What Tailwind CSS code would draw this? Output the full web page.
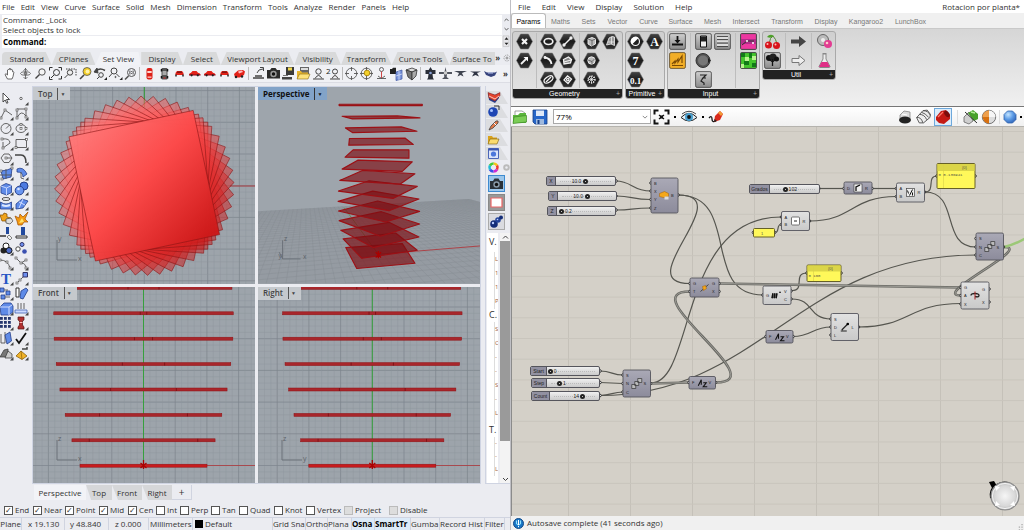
<!DOCTYPE html>
<html lang="en">
<head>
    <meta charset="UTF-8">
    <meta name="viewport" content="width=device-width, initial-scale=1.0">
    <title>Rotacion por planta</title>
    <script src="https://cdn.jsdelivr.net/npm/@tailwindcss/browser@4"></script>
</head>
<body class="flex h-screen overflow-hidden bg-[#ebecf1] font-['Open_Sans','Noto_Sans',sans-serif] text-[8px] leading-[12px] text-[#333]">

    <!-- Shared symbols -->
    <svg class="absolute size-0" aria-hidden="true">
        <defs>
            <linearGradient id="redShade" gradientUnits="userSpaceOnUse" x1="80" y1="120" x2="220" y2="250">
                <stop offset="0" stop-color="#ff7c7c"/><stop offset=".45" stop-color="#fc4a4a"/><stop offset="1" stop-color="#c40f0f"/>
            </linearGradient>
            <linearGradient id="nodeGrey" x1="0" y1="0" x2="0" y2="1"><stop offset="0" stop-color="#e2e2e2"/><stop offset="1" stop-color="#c9c9c9"/></linearGradient>
            <linearGradient id="nodeDark" x1="0" y1="0" x2="0" y2="1"><stop offset="0" stop-color="#aaa9b6"/><stop offset="1" stop-color="#8c8b9b"/></linearGradient>
            <linearGradient id="btn" x1="0" y1="0" x2="0" y2="1"><stop offset="0" stop-color="#cfcfcf"/><stop offset="1" stop-color="#8b8b8b"/></linearGradient>
            <linearGradient id="hexFill" x1="0" y1="0" x2="0" y2="1"><stop offset="0" stop-color="#444"/><stop offset=".5" stop-color="#1c1c1c"/><stop offset="1" stop-color="#333"/></linearGradient>
            <radialGradient id="blueBall" cx=".35" cy=".3" r=".8"><stop offset="0" stop-color="#c3e4ff"/><stop offset=".5" stop-color="#5c9be6"/><stop offset="1" stop-color="#2c5fb4"/></radialGradient>
            <radialGradient id="greyBall" cx=".5" cy=".5" r=".6"><stop offset="0" stop-color="#f6f6f6"/><stop offset=".6" stop-color="#d8d8d8"/><stop offset="1" stop-color="#a5a5a5"/></radialGradient>
        </defs>
        <symbol id="hex" viewBox="0 0 17 17"><path d="M4.6 1h7.8l4.1 7.5-4.1 7.5H4.6L.5 8.500z" fill="url(#hexFill)" stroke="#777" stroke-width=".5"/></symbol>
        <symbol id="plate" viewBox="0 0 17 17"><rect x=".6" y=".6" width="15.800" height="15.800" rx="1.500" fill="url(#btn)" stroke="#444" stroke-width=".8"/></symbol>
        <symbol id="carSide" viewBox="0 0 15 15"><path d="M2 9q0-2 2-2.300L5.500 5h4L11 6.700q2.500.3 2.500 2.300z" fill="#e32118"/><path d="M2 9h11.500" stroke="#801"/><circle cx="4.600" cy="9.300" r="1.100" fill="#222"/><circle cx="10.800" cy="9.300" r="1.100" fill="#222"/></symbol>
        <symbol id="carFront" viewBox="0 0 15 15"><path d="M3.500 9V7L5 5h5l1.500 2v2z" fill="#e32118"/><path d="M5.400 5.500h4.200l.6 1.300H4.800z" fill="#611"/><path d="M4 8.500v2M11 8.500v2" stroke="#222" stroke-width="1.500"/></symbol>
        <symbol id="lens" viewBox="0 0 15 15"><circle cx="9" cy="6" r="3.200" fill="#f4f4f4" stroke="#555"/><path d="M6.500 8.500L2.500 12.500" stroke="#444" stroke-width="1.500"/></symbol>
    </svg>

    <!-- Rhino -->
    <section class="flex min-w-0 basis-[510px] flex-col overflow-hidden">
        <nav class="flex h-[14px] shrink-0 items-center gap-[6px] bg-white pl-[2px]">
            <a href="#">File</a><a href="#">Edit</a><a href="#">View</a><a href="#">Curve</a><a href="#">Surface</a><a href="#">Solid</a><a href="#">Mesh</a><a href="#">Dimension</a><a href="#">Transform</a><a href="#">Tools</a><a href="#">Analyze</a><a href="#">Render</a><a href="#">Panels</a><a href="#">Help</a>
        </nav>
        <div class="flex shrink-0 pl-[2px] pt-[1px]">
            <div class="min-w-0 flex-1">
                <div class="h-[20px] bg-white pl-[1px] leading-[10px]"><p>Command: _Lock</p><p>Select objects to lock</p></div>
                <div class="mt-[1px] flex h-[12px] items-center bg-white pl-[1px]">
                    <label for="cmd" class="font-bold text-black">Command:</label>
                    <input id="cmd" class="min-w-0 flex-1 outline-none">
                </div>
            </div>
            <svg viewBox="0 0 8 34" class="h-[33px] w-[8px]" fill="none" stroke="#555"><path d="M2.500 6l2-2 2 2M2.500 13.500l2 2 2-2"/><path d="M1 21.500h6v11H1z" fill="#e6e6ea" stroke="#bbb" stroke-width=".6"/><path d="M2.500 25.500l2-2.500 2 2.500zM2.500 28.500l2 2.500 2-2.500z" fill="#222" stroke="none"/></svg>
        </div>

        <!-- Toolbar tabs -->
        <div class="mt-[4px] flex h-[13px] shrink-0 items-stretch pl-[2px]" id="tabs">
            <button class="w-[50px] whitespace-nowrap rounded-t bg-[#d8d9da] [clip-path:polygon(0_0,88%_0,100%_100%,0_100%)]">Standard</button>
            <button class="w-[44px] whitespace-nowrap bg-[#d8d9da] [clip-path:polygon(12%_0,88%_0,100%_100%,0_100%)]">CPlanes</button>
            <button class="w-[46px] whitespace-nowrap bg-[#f1f2f6] [clip-path:polygon(12%_0,94%_0,100%_100%,0_100%)]">Set View</button>
            <button class="w-[42px] whitespace-nowrap bg-[#d8d9da] [clip-path:polygon(0_0,88%_0,100%_100%,0_100%)]">Display</button>
            <button class="w-[38px] whitespace-nowrap bg-[#d8d9da] [clip-path:polygon(12%_0,88%_0,100%_100%,0_100%)]">Select</button>
            <button class="w-[74px] whitespace-nowrap bg-[#d8d9da] [clip-path:polygon(8%_0,92%_0,100%_100%,0_100%)]">Viewport Layout</button>
            <button class="w-[47px] whitespace-nowrap bg-[#d8d9da] [clip-path:polygon(10%_0,88%_0,100%_100%,0_100%)]">Visibility</button>
            <button class="w-[51px] whitespace-nowrap bg-[#d8d9da] [clip-path:polygon(10%_0,88%_0,100%_100%,0_100%)]">Transform</button>
            <button class="w-[58px] whitespace-nowrap bg-[#d8d9da] [clip-path:polygon(10%_0,90%_0,100%_100%,0_100%)]">Curve Tools</button>
            <button class="w-[46px] whitespace-nowrap bg-[#d8d9da] [clip-path:polygon(10%_0,100%_0,100%_100%,0_100%)]">Surface To</button>
            <span class="font-bold">»</span>
            <svg viewBox="0 0 8 13" class="ml-[2px] w-[8px]" fill="none" stroke="#777" stroke-width=".8"><circle cx="5" cy="6" r="3" stroke-dasharray="1 1"/><circle cx="5" cy="6" r="1"/></svg>
        </div>

        <!-- View toolbar -->
        <div class="flex h-[18px] shrink-0 items-center border-b border-[#dcdde4] bg-[#f0f1f5] pl-[3px] [&>svg]:size-[15px] [&>svg]:shrink-0" id="viewbar">
            <svg viewBox="0 0 15 15" fill="#fff" stroke="#444" stroke-width=".8"><path d="M4.500 13L2 8.500l1-.8L4.500 9V4l1-.5.6.5.3-1.500h1l.4 1.500.9-.8.6.8.3 1.800.7-.3.600.6-.9 4.500L9 13z"/></svg>
            <svg viewBox="0 0 15 15" fill="none" stroke="#555" stroke-width=".8"><ellipse cx="7.500" cy="7.500" rx="5" ry="1.800"/><path d="M7.500 2v11M5.500 5l2-2.500 2 2.500M5.500 11l2 2 2-2"/><circle cx="7.500" cy="7.500" r="1.300" fill="#888"/></svg>
            <svg><use href="#lens"/></svg>
            <svg viewBox="0 0 15 15" fill="none" stroke="#333"><path d="M1.500 4.500v-3h3M10.500 1.500h3v3M13.500 10v3h-3M4.500 13.500h-3v-3"/><circle cx="8.500" cy="6.500" r="3"/><path d="M6 9l-3 3"/></svg>
            <svg viewBox="0 0 15 15" fill="none" stroke="#444"><path d="M3 3h10v7" stroke-dasharray="1.500 1"/><circle cx="7" cy="6.500" r="2.700" fill="#eee"/><path d="M5 8.500L1.500 12"/></svg>
            <svg viewBox="0 0 15 15"><circle cx="9" cy="5.500" r="4" fill="#f4ce25" stroke="#555" stroke-width=".8"/><circle cx="9.500" cy="5.500" r="2" fill="#fff3a8"/><path d="M6 9L2 13" stroke="#444" stroke-width="1.600"/></svg>
            <svg viewBox="0 0 15 15" fill="none" stroke="#444"><path d="M2 6q4-5 10-1.500" stroke-width="1.500"/><path d="M4 2L1 6l4 1z" fill="#444"/><circle cx="8" cy="9" r="2.300"/><path d="M6.500 10.500l-2.500 2.500"/><path d="M14 11v3h-3z" fill="#222" stroke="none"/></svg>
            <svg viewBox="0 0 15 15" fill="none" stroke="#444"><circle cx="6" cy="5" r="3"/><path d="M4 7.500L1 11M8.500 8l3 3"/><circle cx="7.500" cy="11" r=".6"/><path d="M14.500 11v3h-3z" fill="#222" stroke="none"/></svg>
            <svg viewBox="0 0 15 15" fill="none" stroke="#555"><circle cx="8.500" cy="6.500" r="4"/><path d="M5.500 10L2 13.500" stroke-width="1.600"/><path d="M6.900 4.500v4M10.100 4.500v4M8.500 5.200v.8M8.500 7.200v.8" stroke="#222" stroke-width=".8"/></svg>
            <span class="mx-[1px] h-[13px] w-[2px] border-l border-[#bbb]"></span>
            <svg viewBox="0 0 15 15"><rect x="4.500" y="2" width="6" height="11.500" rx="2" fill="#dd2018"/><path d="M5.300 5h4.400v2H5.300zM5.500 10.500h4v1.200h-4z" fill="#ffd5d0"/></svg>
            <svg viewBox="0 0 15 15"><rect x="4.500" y="2" width="6" height="11.500" rx="1" fill="#555"/><path d="M5.500 5h4v4h-4z" fill="#aaa"/><path d="M4.500 3v2.500M10.500 3v2.500M4.500 10v2.500M10.500 10v2.500" stroke="#111" stroke-width="1.500"/><path d="M6.500 12h2" stroke="#d22"/></svg>
            <svg><use href="#carFront"/></svg>
            <svg><use href="#carSide"/></svg>
            <svg><use href="#carSide"/></svg>
            <svg><use href="#carFront"/></svg>
            <svg viewBox="0 0 15 15"><path d="M2 8l4-3.500 5-.5 2 1.500-1 3.500-4 2.500-5 0z" fill="#e32118"/><path d="M6 5.500l4-1 1 1.500-4 1.500z" fill="#fbb"/><circle cx="4" cy="11" r="1.200" fill="#222"/><circle cx="10" cy="10.500" r="1.200" fill="#222"/></svg>
            <span class="mx-[1px] h-[13px] w-[2px] border-l border-[#bbb]"></span>
            <svg viewBox="0 0 15 15" fill="none" stroke="#444"><path d="M2 12h11M4 10h7" stroke-width="1.500"/><path d="M6 7q1-4 6-4M9 1.500h3.500V5"/></svg>
            <svg viewBox="0 0 15 15"><path d="M1 4h3l1.500-2h4L11 4h3v8.500H1z" fill="#2b2b2b"/><circle cx="7.500" cy="8" r="3.200" fill="#999"/><circle cx="7.500" cy="8" r="1.700" fill="#111"/></svg>
            <svg viewBox="0 0 15 15"><path d="M5 1h8v8H5z" fill="#3a3a3a"/><path d="M7 1.500h4v3H7z" fill="#efd64c"/><path d="M1 11h10v2.500H1z" fill="#444"/><path d="M2 9.500h5" stroke="#777"/></svg>
            <svg viewBox="0 0 15 15"><path d="M4 1h9v8H4z" fill="#666"/><path d="M5 2h7v2H5z" fill="#ddd"/><path d="M1 13V5h4l1 1.500h6V13z" fill="#e7b52c"/><path d="M1 13l2.500-5H14l-2 5z" fill="#fde27a" stroke="#8a6912" stroke-width=".6"/></svg>
            <svg viewBox="0 0 15 15" fill="none" stroke="#444"><circle cx="7.500" cy="5.500" r="2.700"/><path d="M4 12.500q3.500-6 7 0M2 13h11"/></svg>
            <svg viewBox="0 0 15 15" fill="none" stroke="#444"><text x="0" y="8" font-size="8" fill="#222" stroke="none">2</text><circle cx="9" cy="5.500" r="2.500"/><path d="M6 12.500q3-6 6 0M4 13h10"/></svg>
            <span class="mx-[1px] h-[13px] w-px border-l border-[#bbb]"></span>
            <svg viewBox="0 0 15 15" fill="none" stroke="#555" stroke-width=".9"><circle cx="7.500" cy="7.500" r="5.300"/><path d="M7.500 1v4M7.500 10v4M1 7.500h4M10 7.500h4"/></svg>
            <svg viewBox="0 0 15 15" fill="none" stroke="#555" stroke-width=".9"><circle cx="7.500" cy="7.500" r="5.300"/><path d="M7.500 1v13M1 7.500h13"/><circle cx="8" cy="7" r="2.800" fill="#f5d12a" stroke="#a98508"/></svg>
            <svg viewBox="0 0 15 15" fill="none" stroke="#555" stroke-width=".9"><circle cx="7.500" cy="3.500" r="2"/><path d="M7.500 5.500V12" stroke="#c33"/><path d="M3 12.500h9M4 10l3.500 2.500L11 10"/></svg>
            <svg viewBox="0 0 15 15"><path d="M1 3h2l1-1.200h3V8H1z" fill="#222"/><path d="M7 6l6-2v9l-6 1.500z" fill="#7d97dc" stroke="#3c55a0" stroke-width=".7"/><path d="M7 10l6-2M10 5v9" stroke="#dfe6fb" stroke-width=".7"/></svg>
            <svg viewBox="0 0 15 15" stroke="#333" stroke-width=".8"><path d="M2 4l6-2 5 2-5 2z" fill="#ddd"/><path d="M2 4l6 2v8L4 11z" fill="#777"/><path d="M13 4L8 6v8l4-4z" fill="#aaa"/></svg>
            <span class="mx-[1px] h-[13px] w-[2px] border-l border-[#bbb]"></span>
            <svg viewBox="0 0 15 15"><path d="M7.500 1l1.800 3h3.200v4H9.500l.5 4 1 1.500H4L5 12l.5-4h-3V4h3.200z" fill="#2a2e38"/><circle cx="7.500" cy="7" r="1.300" fill="#8aa2d8"/></svg>
            <svg viewBox="0 0 15 15"><path d="M7.500 1l1 5h5.500v2H9l-.3 3 2.300 2H4l2.300-2L6 8H1V6h5.500z" fill="#50545e"/><circle cx="7.500" cy="7" r="1.800" fill="#ccc"/></svg>
            <svg viewBox="0 0 15 15"><path d="M1 5h13L9 7l1.500 3.500L7.500 9l-3 1.500L6 7z" fill="#3f4450"/></svg>
            <svg viewBox="0 0 15 15"><path d="M2 5.500h11L9 7l2 3.500L7.500 9l-3.500 1.500L6 7z" fill="#2f3444"/></svg>
            <svg viewBox="0 0 15 15"><path d="M1 5l3 1.500h8l2-1-2 4-4 1.500-5-2z" fill="#35427c"/><path d="M5 7h5" stroke="#b8c4f0"/></svg>
            <span class="ml-auto pr-[2px] font-bold">»</span>
        </div>

        <div class="flex min-h-0 flex-1 pt-[3px]">
            <!-- Left tool palette -->
            <div class="-ml-px grid w-[30px] shrink-0 grid-cols-2 content-start pt-[5px] [&>svg]:h-[15px] [&>svg]:w-[15px]" id="palette"></div>

            <!-- Viewports -->
            <div class="ml-[3px] grid min-w-0 flex-1 grid-cols-2 grid-rows-2 gap-[3px] border border-[#cfd4e2]">
                <div class="relative overflow-hidden bg-[#9da4ab]">
                    <svg id="vTop" viewBox="33 87 222 197" preserveAspectRatio="xMinYMin slice" class="absolute inset-0 size-full"></svg>
                    <button class="absolute left-0 top-0 flex h-[13px] items-center gap-[5px] bg-[#c5c9cd] px-[5px] font-semibold text-[#444]">Top <span class="border-l border-[#555] pl-[2px] text-[5px]">▼</span></button>
                </div>
                <div class="relative overflow-hidden bg-[#9ea5ac]">
                    <svg id="vPersp" viewBox="6 9 668 591" preserveAspectRatio="xMinYMin slice" class="absolute inset-0 size-full"></svg>
                    <button class="absolute left-0 top-0 flex h-[13px] items-center gap-[5px] bg-[#82a3c8] px-[5px] font-bold text-[#111]">Perspective <span class="border-l border-[#333] pl-[2px] text-[5px]">▼</span></button>
                </div>
                <div class="relative overflow-hidden bg-[#9da4ab]">
                    <svg id="vFront" viewBox="33 287 222 197" preserveAspectRatio="xMinYMin slice" class="absolute inset-0 size-full"></svg>
                    <button class="absolute left-0 top-0 flex h-[13px] items-center gap-[5px] bg-[#c5c9cd] px-[5px] font-semibold text-[#444]">Front <span class="border-l border-[#555] pl-[2px] text-[5px]">▼</span></button>
                </div>
                <div class="relative overflow-hidden bg-[#9da4ab]">
                    <svg id="vRight" viewBox="258 287 222 197" preserveAspectRatio="xMinYMin slice" class="absolute inset-0 size-full"></svg>
                    <button class="absolute left-0 top-0 flex h-[13px] items-center gap-[5px] bg-[#c5c9cd] px-[5px] font-semibold text-[#444]">Right <span class="border-l border-[#555] pl-[2px] text-[5px]">▼</span></button>
                </div>
            </div>

            <!-- Properties panel -->
            <aside class="ml-[4px] flex w-[25px] shrink-0 flex-col border-l border-[#cfd4e2] pt-[5px]">
                <div class="flex flex-col [&>svg]:mb-px [&>svg]:h-[13px] [&>svg]:w-[24px]">
                    <svg viewBox="0 0 24 13"><path d="M0 0h14l8 13H0z" fill="#dcdde0"/><path d="M2 2l7 2 4-2v5L9 12 3 9z" fill="#2b3f8c"/><path d="M2 1.500L9 4l5-2.500v3L9 10 3 7z" fill="#e2432d" stroke="#722" stroke-width=".5"/><path d="M3 5l6 3 4-3" stroke="#fff" fill="none" stroke-width=".7"/></svg>
                    <svg viewBox="0 0 24 13"><path d="M0 0h14l8 13H0z" fill="#dcdde0"/><circle cx="7" cy="7" r="4.800" fill="#1d45b4"/><circle cx="5.500" cy="5.500" r="1.500" fill="#a8c4ff"/><path d="M8 1h5v4" stroke="#333" fill="none"/></svg>
                    <svg viewBox="0 0 24 13"><path d="M0 0h14l8 13H0z" fill="#dcdde0"/><path d="M3 11l2-4 5-5q3-1 2 2L7 9z" fill="#e27a4a" stroke="#444" stroke-width=".8"/><path d="M8 4l2 2" stroke="#fff"/></svg>
                    <svg viewBox="0 0 24 13"><path d="M0 0h14l8 13H0z" fill="#dcdde0"/><path d="M2 11V3h4l1 1.500h4V11z" fill="#d9a21c"/><path d="M2 11l2-5h9l-2 5z" fill="#fbdc6e" stroke="#7b5c0d" stroke-width=".6"/></svg>
                    <svg viewBox="0 0 24 13"><path d="M0 0h14l8 13H0z" fill="#dcdde0"/><path d="M2.500 1.500h10v10h-10z" fill="#dbe4fb" stroke="#4c66b8"/><path d="M2.500 2.500h10" stroke="#3b57b0" stroke-width="2"/><circle cx="7.500" cy="7" r="2.600" fill="#4c77dc"/></svg>
                    <svg viewBox="0 0 24 13" fill="none" stroke-width="2.600"><path d="M7.500 2.500a4 4 0 013.500 2" stroke="#f5c518"/><path d="M11 4.500a4 4 0 010 4" stroke="#ee3b2f"/><path d="M11 8.500a4 4 0 01-3.500 2" stroke="#d02bd4"/><path d="M7.500 10.500a4 4 0 01-3.500-2" stroke="#3b4fea"/><path d="M4 8.500a4 4 0 010-4" stroke="#20b8d8"/><path d="M4 4.500a4 4 0 013.500-2" stroke="#44cc33"/><circle cx="20.500" cy="6.500" r="2.300" stroke="#bbb" stroke-width="2"/></svg>
                </div>
                <div class="flex flex-col gap-[2px] pl-[2px]">
                    <button class="size-[17px] border border-[#3d8ad0] bg-[#9cc6ea]" aria-label="Camera"><svg viewBox="0 0 15 15"><path d="M1 5h3l1.500-2.500h4L11 5h3v8H1z" fill="#2a3138"/><circle cx="7.500" cy="8.500" r="3.200" fill="#8899a8"/><circle cx="7.500" cy="8.500" r="1.700" fill="#111"/></svg></button>
                    <button class="size-[17px] border border-[#888] bg-[#999]" aria-label="Viewport"><svg viewBox="0 0 15 15"><path d="M2 3h11v9H2z" fill="#fff" stroke="#e66" stroke-width="1.200"/></svg></button>
                    <button class="size-[17px] border border-[#aaa] bg-[#dadbe0]" aria-label="Material"><svg viewBox="0 0 15 15"><circle cx="5" cy="10" r="3.800" fill="#142d78"/><circle cx="9" cy="6" r="2.800" fill="#23439a"/><circle cx="12" cy="3.500" r="2" fill="#142d78"/><circle cx="4" cy="9" r="1.200" fill="#b9ccff"/><circle cx="8.500" cy="5.500" r=".8" fill="#b9ccff"/></svg></button>
                </div>
                <div class="mt-[3px] flex min-h-0 flex-1 border-b border-[#cfd4e2] pl-[1px]">
                    <div class="flex w-[11px] flex-col overflow-hidden bg-white pl-[2px] text-[9px]">
                        <p class="h-[19px] pt-[3px]">V.</p>
                        <p class="ml-[5px] h-[57px] border-l border-[#ddd] text-[6px] leading-[14px] text-[#a0603c]">L<br>1<br>1<br>P</p>
                        <p class="h-[13px]">C.</p>
                        <p class="ml-[5px] h-[102px] border-l border-[#ddd] text-[6px] leading-[14px] text-[#a0603c]">S<br>C<br>-<br>-<br>S<br>-<br>L</p>
                        <p class="h-[13px]">T.</p>
                        <p class="ml-[5px] border-l border-[#ddd] text-[6px] leading-[13px] text-[#a0603c]">-<br>-<br>L</p>
                    </div>
                    <div class="ml-[2px] flex flex-1 flex-col items-center bg-[#f3f3f3]">
                        <svg viewBox="0 0 9 8" class="h-[8px] w-[9px] shrink-0" fill="none" stroke="#444"><path d="M2 5.500L4.500 3 7 5.500"/></svg>
                        <div class="w-full basis-4/5 bg-[#9a9a9a]"></div>
                        <svg viewBox="0 0 9 8" class="mt-auto h-[8px] w-[9px] shrink-0" fill="none" stroke="#444"><path d="M2 3l2.500 2.500L7 3"/></svg>
                    </div>
                </div>
            </aside>
        </div>

        <!-- Viewport tabs -->
        <div class="flex h-[17px] shrink-0 items-start pl-[34px] pt-px">
            <button class="h-[15px] w-[52px] bg-[#f2f3f7]">Perspective</button>
            <button class="h-[15px] w-[26px] bg-[#d6d7d9] [clip-path:polygon(0_0,100%_0,100%_100%,20%_100%)]">Top</button>
            <button class="h-[15px] w-[30px] bg-[#d6d7d9] [clip-path:polygon(0_0,100%_0,100%_100%,20%_100%)]">Front</button>
            <button class="h-[15px] w-[30px] bg-[#d6d7d9] [clip-path:polygon(0_0,100%_0,100%_100%,20%_100%)]">Right</button>
            <button class="h-[15px] w-[20px] border-b border-r border-[#d0d4e0] text-[10px]">+</button>
        </div>

        <!-- Object snaps -->
        <div class="flex h-[16px] shrink-0 items-center pl-[4px] pt-[2px]" id="osnap"></div>

        <!-- Status bar -->
        <div class="flex h-[13px] shrink-0 items-center overflow-hidden whitespace-nowrap border-t border-[#d0d4e0]">
            <span class="flex w-[22px] justify-end border-r border-[#d0d4e0]">CPlane</span>
            <span class="w-[43px] border-r border-[#d0d4e0] pl-[6px]">x 19.130</span>
            <span class="w-[44px] border-r border-[#d0d4e0] pl-[5px]">y 48.840</span>
            <span class="w-[40px] border-r border-[#d0d4e0] pl-[6px]">z 0.000</span>
            <span class="w-[44px] border-r border-[#d0d4e0] pl-[1px]">Millimeters</span>
            <span class="flex w-[80px] items-center gap-[2px] border-r border-[#d0d4e0] pl-[2px]"><i class="size-[8px] bg-black"></i>Default</span>
            <span class="w-[33px] border-r border-[#d0d4e0]">Grid Sna</span>
            <span class="w-[22px] border-r border-[#d0d4e0]">Ortho</span>
            <span class="w-[24px] border-r border-[#d0d4e0]">Plana</span>
            <span class="w-[23px] border-r border-[#d0d4e0] bg-[#dceaf8] font-bold text-black">Osna</span>
            <span class="w-[36px] border-r border-[#d0d4e0] bg-[#dceaf8] font-bold text-black">SmartTr</span>
            <span class="w-[29px] border-r border-[#d0d4e0]">Gumba</span>
            <span class="w-[45px] border-r border-[#d0d4e0]">Record Hist</span>
            <span class="border-r border-[#d0d4e0]">Filter</span>
        </div>
    </section>

    <!-- Grasshopper -->
    <section class="flex min-w-0 flex-1 flex-col border-l border-[#bfbfc4] bg-[#f0f0f0]">
        <nav class="flex h-[13px] shrink-0 items-center gap-[11px] bg-white pl-[7px] pr-[4px] leading-[10px]">
            <a href="#">File</a><a href="#">Edit</a><a href="#">View</a><a href="#">Display</a><a href="#">Solution</a><a href="#">Help</a>
            <span class="ml-auto">Rotacion por planta*</span>
        </nav>
        <div class="flex h-[16px] shrink-0 items-end border-b border-[#c9c9c9] font-['Liberation_Sans',sans-serif] text-[7px] leading-[13px] text-[#777]">
            <button class="h-[15px] w-[35px] rounded-t-[3px] border border-b-0 border-[#bbb] bg-white text-black">Params</button>
            <button class="w-[29px]">Maths</button><button class="w-[27px]">Sets</button><button class="w-[31px]">Vector</button><button class="w-[31px]">Curve</button><button class="w-[33px]">Surface</button><button class="w-[31px]">Mesh</button><button class="w-[36px]">Intersect</button><button class="w-[46px]">Transform</button><button class="w-[32px]">Display</button><button class="w-[48px]">Kangaroo2</button><button class="w-[41px]">LunchBox</button>
        </div>

        <!-- Component ribbon -->
        <div class="flex h-[77px] shrink-0 items-start gap-[2px] bg-gradient-to-b from-[#d6d6d6] to-[#f0f0f0] pl-[1px] pt-[2px] font-['Liberation_Sans',sans-serif] text-[7px] leading-[9px]" id="ribbon"></div>

        <!-- Canvas toolbar -->
        <div class="flex h-[21px] shrink-0 items-center border-b border-t border-b-[#b5b3ae] border-t-[#777] bg-gradient-to-b from-white to-[#f1f1f1] pl-[1px] [&>svg]:shrink-0">
            <svg viewBox="0 0 16 16" class="size-[16px]"><path d="M3 2h7l3 2v8H3z" fill="#fff" stroke="#888" stroke-width=".8"/><path d="M1 14V6h5l2-2h6v10z" fill="#5bb53c"/><path d="M1 14.500l1-6.500 12.500-1.500V13z" fill="#7bcd55" stroke="#3d8a25" stroke-width=".7"/></svg>
            <svg viewBox="0 0 16 16" class="ml-[4px] size-[16px]"><path d="M1 1h14v14H3l-2-2z" fill="#2766c8" stroke="#173f86" stroke-width=".8"/><path d="M4 1.500h8v5.500H4z" fill="#dfe9f7"/><path d="M4 10h8v5H4z" fill="#9fb9dd"/><path d="M5.500 11h2v4h-2z" fill="#173f86"/></svg>
            <select aria-label="Zoom" class="ml-[5px] h-[15px] w-[98px] appearance-none border border-[#a8a8a8] bg-white px-[2px] font-['Open_Sans',sans-serif] text-[8px] leading-[12px] text-black"><option>77%</option></select>
            <svg viewBox="0 0 8 8" class="-ml-[9px] mr-[5px] size-[6px]" fill="none" stroke="#666"><path d="M1 2.500l3 3 3-3"/></svg>
            <svg viewBox="0 0 17 16" class="h-[16px] w-[17px]" fill="none" stroke="#111" stroke-width="2"><path d="M1.500 5.500V1.500h4M11.500 1.500h4v4M15.500 10.500v4h-4M5.500 14.500h-4v-4"/><path d="M6 6l5 4M11 6l-5 4" stroke-width="1.300"/><path d="M7 6.500h3v3H7z" fill="#111" stroke="none"/></svg>
            <i class="mx-[4px] size-[2px] bg-black"></i>
            <svg viewBox="0 0 18 16" class="h-[16px] w-[18px]"><path d="M1 8.500Q9 0 17 8.500 9 15.500 1 8.500z" fill="#e3eef5" stroke="#222"/><circle cx="9" cy="8" r="4" fill="#4aa0cf"/><circle cx="9" cy="8" r="1.900" fill="#111"/><path d="M2 5q7-5.500 14 0" fill="none" stroke="#444"/></svg>
            <i class="mx-[4px] size-[2px] bg-black"></i>
            <svg viewBox="0 0 16 16" class="size-[16px]"><path d="M1 9q3-3 3 1t4 2" fill="none" stroke="#111" stroke-width="1.300"/><path d="M6 13l1-6 5-5 3 3-3 6z" fill="#d92a1c"/><path d="M12 2l3 3-2 2-3-3z" fill="#f19a38"/><path d="M6 13l.5-3 2.500 2z" fill="#222"/></svg>
            <div class="ml-auto flex items-center gap-[2px]">
                <svg viewBox="0 0 16 16" class="size-[16px]"><path d="M3 6l4-4 6 1v7H3z" fill="#ddd" stroke="#888" stroke-width=".8"/><ellipse cx="8" cy="11" rx="6" ry="3.500" fill="#222"/><path d="M5 5l5 1" stroke="#fff"/></svg>
                <svg viewBox="0 0 16 16" class="size-[17px]" fill="#eee" stroke="#555" stroke-width=".9"><path d="M1.500 9l6-6.500 4-.5 3 4-.5 3-6 5-4 0z"/><path d="M1.500 9q4-1 6 5M7.500 2.500q5 0 7 4.500M4 6q5 0 7 5M6 4q4 1 7 5" fill="none"/></svg>
                <div class="border border-[#6ea9dc] bg-[#dcecfa]"><svg viewBox="0 0 16 16" class="size-[16px]"><path d="M1 8l5-6 5-1 4 5v4l-6 5-5-1-3-3z" fill="#c41a14"/><ellipse cx="12" cy="5" rx="2.300" ry="3.600" transform="rotate(-35 12 5)" fill="#7c0d0b"/><path d="M3 8l5-5" stroke="#ff7a6c" stroke-width="1.300"/></svg></div>
                <span class="mx-[3px] h-[14px] border-l border-[#ddd]"></span>
                <svg viewBox="0 0 16 16" class="size-[16px]"><path d="M1 8l5-5 4 9-4 3-5-2z" fill="#cfcfcf" stroke="#666" stroke-width=".8"/><path d="M5 4l5-3 5 4v5l-4 2z" fill="#48a02a"/><path d="M2 3l12 11" stroke="#333"/><path d="M8 3l4 1" stroke="#b6ec9b" stroke-width="1.500"/></svg>
                <svg viewBox="0 0 16 16" class="size-[16px]"><circle cx="8" cy="8" r="6.700" fill="#ddd" stroke="#555" stroke-width=".8"/><path d="M8 1.600a6.400 6.400 0 000 12.800z" fill="#d8700f"/><path d="M8 1.600a6.400 6.400 0 00-6.400 6.400H8z" fill="#ee9f4c"/><path d="M8 1.600a6.400 6.400 0 016.400 6.400H8z" fill="#f6f6f6"/></svg>
                <span class="h-[14px] border-l border-[#ddd]"></span>
                <svg viewBox="0 0 16 16" class="size-[16px]"><path d="M5.500 2h5l3.500 3.500v5L10.500 14h-5L2 10.500v-5z" fill="url(#blueBall)" stroke="#3466ad" stroke-width=".8"/></svg>
                <i class="mr-[2px] size-[2px] bg-black"></i>
            </div>
        </div>

        <!-- Canvas -->
        <main class="relative min-h-0 flex-1 overflow-hidden border-l border-[#8b8b8b] bg-[#d4d0c8]">
            <svg class="absolute inset-0 size-full font-['Liberation_Sans',sans-serif]"><g transform="translate(-512 -127)" id="canvas"></g></svg>
            <div id="sliders"></div>
            <svg class="absolute bottom-[2px] right-[0px] h-[36px] w-[36px]" viewBox="0 0 36 36">
                <path d="M3.500 20Q2 11 9 7.500q6-4 12-1.500" fill="none" stroke="#000" stroke-width="3"/><path d="M1 4l5-1 3 5-5 2z"/>
                <circle cx="17" cy="18" r="14" fill="url(#greyBall)" stroke="#8a8a8a" stroke-width="1.200"/><circle cx="17" cy="18" r="12.600" fill="none" stroke="#fff" stroke-width=".8"/>
                <path d="M7 8l5 1-4 4zM27 8l-5 1 4 4zM7 28l5-1-4-4zM27 28l-5-1 4-4z" fill="#fff"/>
            </svg>
        </main>

        <footer class="flex h-[14px] shrink-0 items-center gap-[3px] bg-[#f0f0f0] pl-[2px]">
            <svg viewBox="0 0 11 11" class="size-[11px]"><circle cx="5.500" cy="5.500" r="5" fill="#1673c4" stroke="#134a86"/><path d="M3.500 2.500v3q2 3 4 0v-3" fill="none" stroke="#8fe0ff" stroke-width="1.200"/><path d="M5.500 2v5M5.500 8v1.200" stroke="#fff"/></svg>
            <span>Autosave complete (41 seconds ago)</span>
            <svg viewBox="0 0 8 8" class="ml-auto mt-auto size-[7px]" fill="#aaa"><path d="M5 1h1.500v1.500H5zM5 4h1.500v1.500H5zM2 4h1.500v1.500H2zM5 7h1.500v1H5zM2 7h1.500v1H2z"/></svg>
        </footer>
    </section>

    <script>
        const byId = id => document.getElementById(id);

        // ---- palette icons, two per row ----
        const corner = '<path d="M14.500 11v3.500H11z" fill="#444" stroke="none"/>';
        const line = d => `<path d="${d}" fill="none" stroke="#555" stroke-width=".9"/>`;
        const dots = (...p) => p.map(([x, y]) => `<rect x="${x - 1}" y="${y - 1}" width="2" height="2" fill="#fff" stroke="#444" stroke-width=".6"/>`).join('');
        const blue = d => `<path d="${d}" fill="#5f8be8" stroke="#253f8a" stroke-width=".8"/>`;
        byId('palette').innerHTML = [
            '<path d="M4 2v9l2.200-2 1.500 3.300 1.300-.6L7.500 8.500h3z" fill="#fff" stroke="#222" stroke-width=".8"/>',
            '<circle cx="7" cy="7.500" r="1.200" fill="#fff" stroke="#444" stroke-width=".8"/>' + corner,
            line('M2 12l4-8 7 5') + dots([2, 12], [6, 4]) + corner,
            line('M3 12V3h9v7M3 12q4-9 9-2') + dots([3, 12], [3, 4], [12, 3], [12, 11]) + corner,
            line('M2 7.500a5 5 0 1010 0 5 5 0 10-10 0M7 7.500l4-4') + corner,
            line('M2 7.500a5 4 0 1010 0 5 4 0 10-10 0') + dots([7, 7.500], [7, 3.500], [12, 7.500]) + corner,
            line('M3 3q8-1 8 4L4 12V6') + dots([3, 3], [4, 12]) + corner,
            line('M2 3.500h10.500v8H2z') + dots([2, 11.500], [12.500, 3.500]) + corner,
            line('M5 3h5l3 4-3 4.500H5L2 7z M7 7h6') + dots([7, 7]) + corner,
            '<path d="M1 4h6q5 0 5 8" fill="none" stroke="#444" stroke-width="1.600"/>' + corner,
            blue('M2 5l6-1 5-2-1 9-8 2z') + line('M1 9h12M7 3v10') + dots([2, 5], [13, 2], [3, 13]) + corner,
            blue('M3 3q6-3 10 5l-4 3q0-5-6-5z') + line('M7 6v6l3 1') + corner,
            blue('M2 5l5-2.500 5.500 2v7l-5 2.500L2 12z') + '<path d="M2 5l5.500 2 5-2.500M7.500 7v7" stroke="#c5d6ff" fill="none"/>' + corner,
            '<circle cx="10" cy="5" r="4" fill="#4c7ae0" stroke="#253f8a"/><circle cx="5.500" cy="9.500" r="4.300" fill="#6a96f0" stroke="#253f8a"/><circle cx="4.500" cy="8" r="1.300" fill="#d9e5ff"/>' + corner,
            '<ellipse cx="7" cy="3" rx="4" ry="1.500" fill="none" stroke="#555"/>' + blue('M1.500 6v7h11V6q-5.500 4-11 0z') + '<path d="M3 9q4 2 8 0" stroke="#dde8ff" fill="none" stroke-width="2"/>' + corner,
            blue('M2 8l6-5 6 2-5 7-7 1z') + '<path d="M5 6l6 3M9 3l-4 9" stroke="#cfdcff" fill="none"/>' + corner,
            '<path d="M1 4h3l1-2 3 1v3l4 1-1 4-3 1-1-2-4 0z" fill="#f0a41d" stroke="#7c4b00" stroke-width=".7"/><path d="M7 8l5-1 2 3-3 3-4-1z" fill="#ddd" stroke="#444" stroke-width=".7"/>',
            '<path d="M1 5l4 2 1-4 3 3 5-5-3 7 3 3-4 0-2 3H4l-1-4z" fill="#f49a12" stroke="#a14e00" stroke-width=".7"/><path d="M5 12l3-5 2 4z" fill="#ffe36b"/>',
            '<path d="M1 10h6" stroke="#333" stroke-width="1.500"/><path d="M7 1l3 0v7H7z" fill="#224a9e"/><path d="M10 9l3 3-2 2-3-3z" fill="#eee" stroke="#555" stroke-width=".7"/>',
            '<path d="M2 10h11v2H2z" fill="#eee" stroke="#333"/><path d="M7 1h4v8H7z" fill="#224a9e"/>',
            '<circle cx="7" cy="5" r="3" fill="#fff" stroke="#222"/><circle cx="4.500" cy="9.500" r="3" fill="#222"/><circle cx="10" cy="9.500" r="3" fill="#4f6dc8" stroke="#111"/>' + corner,
            '<circle cx="8" cy="3.500" r="2" fill="#6d8ff0" stroke="#336"/><circle cx="4" cy="8" r="2.200" fill="#fff" stroke="#444"/><circle cx="10.500" cy="10.500" r="2.300" fill="#3b50b0"/>',
            line('M1 4q8 0 10 8') + dots([1, 4], [8, 6], [11, 12]) + corner,
            line('M2 2l5 5q5 0 5 6M7 7l5-3') + dots([2, 2], [7, 7], [12, 4], [12, 12]) + corner,
            '<text x="2" y="12.500" font-family="Liberation Serif" font-weight="700" font-size="15" fill="#2856c4">T</text>' + corner,
            '<path d="M9 1.500h4.500V6H9z" fill="#6d8ff0" stroke="#336"/>' + line('M4 11L9 6') + dots([3, 12], [6, 9]) + corner,
            blue('M1 2h4v4H1zM7 5h4v4H7zM2 9h4v4H2z') + line('M5 4h4M6 11h5') + corner,
            '<path d="M2 2h3v9H2z" fill="#fff" stroke="#333"/>' + blue('M7 5l5-3 2 2-5 9-3-1z'),
            blue('M1 6l4-4h7l2 3v6l-4 3H2z') + '<path d="M1 6h9v8M10 6l3-2" stroke="#cfdcff" fill="none"/>' + corner,
            '<path d="M1 9h12v3H1z" fill="#cbd9ff" stroke="#4464b4" stroke-width=".8"/>' + line('M4 2v6M7 2v6M10 2v6') + corner,
            [1, 5, 9].map(y => [1, 5, 9].map(x => `<rect x="${x}" y="${y}" width="2.800" height="2.800" fill="#26376e"/>`).join('')).join('') + corner,
            '<path d="M4 1h6v3L8.500 5v4l1.500 2v2H4v-2l1.500-2V5L4 4z" fill="#b03030" stroke="#511" stroke-width=".7"/><path d="M5.500 6.500h3" stroke="#fbb"/>' + corner,
            line('M2 3v9h4V1') + blue('M6 4l5-3 1.500 9L8 13z') + corner,
            '<path d="M2 8l3 4 7-10" fill="none" stroke="#111" stroke-width="1.800"/>' + corner,
            '<path d="M1 11l4-7 4-1v8z" fill="#777" stroke="#333" stroke-width=".7"/><path d="M6 12l3-7 4 3v4z" fill="#ccc" stroke="#333" stroke-width=".7"/>' + corner,
            '<path d="M2 10l5-5 6 5-5 3.500z" fill="#f0b32a" stroke="#7c5200" stroke-width=".7"/><path d="M7 5l1 8.500" stroke="#7c5200" stroke-width=".6"/><path d="M8 3h5V1" stroke="#444" fill="none" stroke-width="1.500"/>' + corner
        ].map(i => `<svg viewBox="0 0 15 15">${i}</svg>`).join('');

        // ---- viewports ----
        function grid(x0, y0, cx, cy) {
            let s = '';
            const step = 6.340;
            for (let i = -40; i <= 40; i++) {
                const major = i % 5 === 0;
                const st = `stroke="${major ? '#7d848c' : '#8e959d'}" stroke-width="${major ? .7 : .4}"`;
                const x = cx + i * step, y = cy + i * step;
                s += `<path d="M${x} ${y0}v197M${x0} ${y}h222" ${st}/>`;
            }
            return s;
        }
        const axes = (x, y, a, b) => `<path d="M${x} ${y - 20}v20h20" fill="none" stroke="#6a7078"/><text x="${x + 1}" y="${y - 19}" font-size="7" fill="#5d636a">${b}</text><text x="${x + 21}" y="${y + 1}" font-size="7" fill="#5d636a">${a}</text>`;

        const R = 89.800, turn = 102 / 13;
        let plan = grid(33, 87, 144.300, 185.700) + '<path d="M144.300 87v20" stroke="#2f9a34"/><path d="M230 186h26" stroke="#a83a40"/>';
        for (let k = 0; k < 14; k++) {
            const pts = [45, 135, 225, 315].map(d => {
                const a = (d - k * turn) * Math.PI / 180;
                return (144.300 + R * Math.cos(a)).toFixed(1) + ',' + (185.700 + R * Math.sin(a)).toFixed(1);
            }).join(' ');
            plan += `<polygon points="${pts}" fill="url(#redShade)" fill-opacity="${k === 13 ? .96 : .5}" stroke="#8a1414" stroke-width=".6"/>`;
        }
        byId('vTop').innerHTML = plan + axes(57, 260, 'x', 'y');

        function elevation(id, x0, cx, ax, a) {
            let s = grid(x0, 287, cx, 465.500) + `<path d="M${cx} 287v178" stroke="#36a03c"/><path d="M${cx} 465.500h120" stroke="#b0383c" stroke-width=".8"/>`;
            for (let k = 0; k < 8; k++) {
                const t = k * turn * Math.PI / 180, q = Math.PI / 4;
                const h = R * Math.cos(q - t), c = R * Math.cos(q + t), y = 465.700 - k * 25.400;
                s += `<rect x="${cx - h}" y="${y - 1.500}" width="${2 * h}" height="3" fill="${k ? '#a8262b' : '#c81c1e'}" stroke="#8f1216" stroke-width=".5"/>`;
                if (k) s += `<path d="M${cx - c} ${y - 1.500}v3M${cx + c} ${y - 1.500}v3" stroke="#6d0c10" stroke-width=".7"/>`;
            }
            s += `<path d="M${cx} 460v9M${cx - 3} 463l6 5M${cx + 3} 463l-6 5" stroke="#a00" stroke-width="1.300"/>`;
            byId(id).innerHTML = s + axes(ax, 460, a, 'z');
        }
        elevation('vFront', 33, 143.500, 57, 'x');
        elevation('vRight', 258, 372.300, 282, 'y');

        // perspective view: floor lines run to two vanishing points
        let floor = '';
        for (let x = -900; x < 4200; x += 30) floor += `<path d="M150 213L${x} 600"/>`;
        for (let k = 0; k < 34; k++) {
            const y = 213 + 1 / (.00588 - k * .000115);
            floor += `<path d="M6 ${y}L6600 0"/>`;
        }
        const slabs = ['440,480 478,539 303,555 270,492', '420,448 485,500 318,524 262,466', '400,416 490,460 352,492 255,440', '377,384 492,421 374,458 250,411',
            '366,352 492,383 390,415 248,382', '351,322 490,346 400,381 247,353', '340,291 485,308 412,344 248,322', '320,260 478,270 434,301 252,290',
            '306,229 470,234 440,263 259,256', '292,198 460,198 460,223 268,220', '281,164 449,163 473,182 279,184', '269,132 437,129 484,142 290,146',
            '259,97 425,96 493,102 290,105', '250,61 500,61 500,65 250,65'];
        byId('vPersp').innerHTML = `<clipPath id="fl"><path d="M6 383L640 346l34 9v245H6z"/></clipPath><path d="M6 383L640 346l34 9v245H6z" fill="#959ba2"/>
            <g clip-path="url(#fl)" stroke="#82898f" stroke-width="1">${floor}</g>
            <path d="M265 372l103 140" stroke="#4c8a3a" stroke-width="2"/><path d="M368 512l306-25" stroke="#b03035" stroke-width="2.500"/>
            <g fill="#7c0d12" fill-opacity=".66" stroke="#9c1015" stroke-width="3.500" stroke-linejoin="round">${slabs.map(p => `<polygon points="${p}"/>`).join('')}</g>
            <path d="M360 506l16 16M376 506l-16 16M368 502v22" stroke="#a00" stroke-width="4"/>
            <path d="M80 470v56h54M80 526l-10-20" fill="none" stroke="#6a7078" stroke-width="3"/>
            <g font-size="20" fill="#5d636a"><text x="84" y="471">z</text><text x="141" y="527">x</text><text x="68" y="524">y</text></g>`;

        // ---- object snaps ----
        [['End', 1, 29], ['Near', 1, 32], ['Point', 1, 34], ['Mid', 1, 29], ['Cen', 1, 28], ['Int', 0, 24], ['Perp', 0, 31], ['Tan', 0, 28], ['Quad', 0, 35], ['Knot', 0, 32], ['Vertex', 0, 38], ['Project', 2, 45], ['Disable', 2, 45]].forEach(([n, on, w]) => {
            byId('osnap').insertAdjacentHTML('beforeend', `<label class="flex shrink-0 items-center gap-[2px]" style="width:${w}px"><input type="checkbox" ${on === 1 ? 'checked' : ''} ${on === 2 ? 'disabled' : ''} class="relative size-[9px] shrink-0 appearance-none border border-[#555] bg-white checked:after:absolute checked:after:-top-[3px] checked:after:left-0 checked:after:text-[8px] checked:after:content-['✓'] disabled:border-[#bbb] disabled:bg-[#ddd]">${n}</label>`);
        });

        // ---- component ribbon ----
        const hex = g => `<svg viewBox="0 0 17 17" class="size-[17px]"><use href="#hex"/><g fill="none" stroke="#f2f2f2" stroke-width="1.300">${g}</g></svg>`;
        const plate = g => `<svg viewBox="0 0 17 17" class="size-[17px]"><use href="#plate"/>${g}</svg>`;
        const plain = g => `<svg viewBox="0 0 17 17" class="size-[17px]">${g}</svg>`;
        const glyph = (t, s) => hex(`<text x="8.500" y="12.500" text-anchor="middle" font-family="Liberation Serif" font-weight="700" font-size="${s}" fill="#fff" stroke="none">${t}</text>`);
        const panels = [
            ['Geometry', 'px-[3px]', [
                [[hex('<path d="M6 6l5 5M11 6l-5 5" stroke-width="2.200"/>'), hex('<path d="M5 12l5-5" stroke-width="1.800"/><path d="M7.500 5H12v4.500z" fill="#fff" stroke="none"/>')]],
                [[hex('<ellipse cx="8.500" cy="8.500" rx="4.300" ry="3" stroke-width="1.700"/>'), hex('<path d="M4.500 5.500q6 .5 7 6.500" stroke-width="1.800"/><circle cx="5" cy="5.500" r=".8"/>'), hex('<ellipse cx="8.500" cy="8.500" rx="5" ry="2.700" transform="rotate(-35 8.500 8.500)"/><path d="M6 11l5-5"/>')],
                 [hex('<path d="M5 12l7-7" stroke-width="1.500"/><circle cx="5" cy="12" r="1" fill="#fff"/><circle cx="12" cy="5" r="1" fill="#fff"/>'), hex('<path d="M4.500 7.500l5-2.500 3 2.500-1 3.500-6.500 1z" fill="#888"/><path d="M5 10l7-2"/>'), hex('<path d="M5 9l3.500-4 4 3-3.500 4.500z"/><circle cx="8.800" cy="8.600" r="1.200"/>')]],
                [[hex('<path d="M5 6l4-1.500L12.500 6v5L8.500 13 5 11z" fill="#bbb" stroke-width=".9"/><path d="M5 6l4 1.500L12.500 6M9 7.500V13" stroke="#555" stroke-width=".8"/>'), hex('<circle cx="8.500" cy="8.500" r="3.700" fill="#bbb" stroke-width=".9"/><path d="M5 8l4 1.500 3-3M9 9.500v3" stroke="#555" stroke-width=".8"/>'), hex('<circle cx="8.500" cy="8.500" r="3.500" stroke-dasharray="1.300 1" /><path d="M8.500 5v7M5 8.500h7M6 6l5 5M11 6l-5 5" stroke-width=".7"/>')],
                 [hex('<path d="M4.500 12L7 5l3-1.500 2.500.5v8.500L9 11z" fill="#999" stroke-width=".8"/><path d="M9.500 4v7M6 9h6" stroke-width=".7"/>')]]]],
            ['Primitive', 'px-px', [[[hex('<circle cx="8.500" cy="8.500" r="4" stroke-width="1.200"/><path d="M5 11.500A4.600 4.600 0 0111.500 5z" fill="#fff" stroke="none"/>'), glyph('7', 12), glyph('0.1', 9)], [glyph('A', 12)]]]],
            ['Input', 'px-[4px] first:pl-[1px] last:pr-[2px]', [
                [[plate('<path d="M3 11.500h11M8.500 3v5" stroke="#111" stroke-width="1.800"/><path d="M5.500 7h6l-3 3.500z" fill="#111"/>'), '<svg viewBox="0 0 17 17" class="size-[17px]"><rect x=".6" y=".6" width="15.800" height="15.800" rx="1.500" fill="#f2ae27" stroke="#55452a" stroke-width=".8"/><path d="M3 12l3-3v2l3-4v3l4-6v7M3 13.500h11" fill="none" stroke="#7b4b05" stroke-width="1.200"/></svg>']],
                [[plate('<path d="M5.500 3h6v11h-6z" fill="#eee" stroke="#111"/><path d="M6 3.500h5v5H6z" fill="#222"/>'), plain('<circle cx="8" cy="8.500" r="7" fill="#555" stroke="#333"/><circle cx="8" cy="8.500" r="5" fill="#777"/><path d="M13 6l3 2.500-3 2.500z" fill="#222"/>'), plate('<path d="M5 4h6l-3 3h3M8 7l-2 3 3 2v2" fill="none" stroke="#222" stroke-width="1.200"/>')],
                 [plate('<path d="M3 5h11M3 8.500h11M3 12h11" stroke="#ddd" stroke-width="2"/><path d="M3 6.500h11M3 10h11M3 13.500h11M3 3.500h11" stroke="#333" stroke-width=".8"/>')]],
                [[plain('<rect x=".6" y=".6" width="15.800" height="15.800" rx="1" fill="#ec38a0" stroke="#444"/><path d="M1 6h15v5H1z" fill="#b32c8b"/><path d="M2 12l5-4h7" stroke="#333" fill="none"/><circle cx="7" cy="8" r="1" fill="#fff"/><circle cx="13" cy="10" r="1" fill="#fff"/>'), plain('<rect x=".6" y=".6" width="15.800" height="15.800" rx="1" fill="#44c62c" stroke="#444"/><path d="M1 1h4v4H1zM9 1h3v5H9zM4 9h5v4H4zM12 11h4v4h-4z" fill="#117a17"/><path d="M5 5h4v4H5zM12 4h4v4h-4zM1 12h3v4H1z" fill="#baf490"/>')]]]],
            ['Util', 'px-[4px] first:pl-[1px] last:pr-[2px]', [
                [[plain('<path d="M5 11Q6 4 9 3q3 3 4 8" fill="none" stroke="#583"/><path d="M3 4q3-4 7-1-3 3-7 1z" fill="#4da02a"/><circle cx="4.500" cy="12" r="3.500" fill="#d8141b"/><circle cx="12.500" cy="12.500" r="3.500" fill="#d8141b"/><circle cx="3.500" cy="11" r="1" fill="#fbb"/><circle cx="11.500" cy="11.500" r="1" fill="#fbb"/>'), plate('<circle cx="5" cy="6" r="3" fill="#111"/><circle cx="9" cy="5" r="3.500" fill="#222"/><circle cx="12.500" cy="7" r="2.500" fill="#111"/><path d="M8.500 7v7M5 7l3.500 3L12 7" stroke="#111" fill="none" stroke-width="1.300"/>')]],
                [[plain('<path d="M1 6.500h8V3l7 5.500L9 14v-3.500H1z" fill="#444"/>'), plain('<path d="M2 6.500h7V3.500l6 5-6 5v-3H2z" fill="#eee" stroke="#777"/>')]],
                [[plain('<circle cx="7" cy="7" r="5.500" fill="#bbb" stroke="#666"/><circle cx="7" cy="7" r="2" fill="#eee"/><circle cx="12" cy="11" r="4" fill="#e23d92"/><circle cx="11" cy="10" r="1.300" fill="#fcc"/>'), plain('<path d="M6.500 1.500h4M7 2v5l-4 7.500q0 1 1 1h9q1 0 1-1L10 7V2z" fill="#eee" stroke="#888"/><path d="M5.500 10h6l2.500 5H3z" fill="#df2f86"/>')]]]]
        ];
        byId('ribbon').innerHTML = panels.map(([name, pad, groups]) => `
            <div class="overflow-hidden rounded-[3px] border border-[#a9a9a9] bg-gradient-to-b from-[#cfcfcf] to-[#e4e4e4]">
                <div class="flex divide-x divide-[#bdbdbd] py-px">${groups.map(g => `<div class="flex gap-[2px] ${pad}">${g.map(c => `<div class="flex flex-col gap-[2px]">${c.join('')}</div>`).join('')}</div>`).join('')}</div>
                <div class="flex bg-[#222] pr-[2px] text-white"><span class="flex-1 text-center">${name}</span><span class="text-[#aaa]">+</span></div>
            </div>`).join('');

        // ---- definition canvas ----
        let c = '';
        for (let x = 568.500; x < 1030; x += 62) c += `<path d="M${x} 127v400" stroke="#c5c1b9"/>`;
        for (let y = 131.500; y < 520; y += 20.700) c += `<path d="M512 ${y}h520" stroke="#c9c5bd"/>`;

        const wire = (d, w = 1) => w > 1
            ? `<path d="${d}" fill="none" stroke="#696964" stroke-width="2.600"/><path d="${d}" fill="none" stroke="#aaa8a2" stroke-width=".8"/>`
            : `<path d="${d}" fill="none" stroke="#55554f" stroke-width="1.200"/>`;
        c += ['M616 181C632 181 632 191 651 191', 'M617 196C632 196 632 199.500 651 199.500', 'M617 210C632 210 632 208 651 208',
            'M678 195C740 195 628 283.500 690 283.500', 'M678 195C742 195 700 295 763 295', 'M651 383C695 383 678 217 781 217',
            'M600 395.500C760 395.500 800 255 976 255', 'M600 371C612 371 612 375 623 375', 'M600 382.500L623 383.500', 'M600 395.500C612 395.500 612 392 623 392',
            'M819 188.500H844', 'M872 188.500H896', 'M810 221C852 221 852 196.500 896 196.500', 'M775 232.500C780 232.500 776 224.500 781 224.500',
            'M925 192C936 192 926 176 937 176', 'M925 192C960 192 940 247 976 247', 'M792 290.500C806 290.500 792 273 807 273',
            'M792 299C814 299 808 319 831 319', 'M793 336.500C812 336.500 812 327 831 327', 'M859 327C910 327 908 303.500 961 303.500'].map(d => wire(d)).join('');
        c += wire('M651 383.500L689 382.500', 2) + wire('M716 382.500C776 382.500 630 291.500 690 291.500', 2) + wire('M719 283.500L961 287.500', 2) + wire('M1004 247C1034 247 930 295.500 961 295.500', 2);
        c += '<path d="M1004 247q10-2 22-9" stroke="#9cc877" stroke-width="2.500" fill="none"/>';

        // x, y, w, h, dark, inputs, outputs, icon
        const nodes = [
            [651, 178, 27, 35, 1, [['B', 183], ['X', 191], ['Y', 199.500], ['Z', 208]], [['B', 195]], '<path d="M-5-2l5-2 4 2v3l-5 1-4-1z" fill="#f5a81b" stroke="#a65f00" stroke-width=".5"/><path d="M0 1h4v3H0z" fill="#ddd"/>'],
            [690, 278, 29, 19, 1, [['G', 283.500], ['T', 291.500]], [['G', 283.500], ['X', 291.500]], '<path d="M-4 4l8-7" stroke="#444"/><path d="M-2-1l3-1 1 3-3 2z" fill="#f5a81b" stroke="#a65f00" stroke-width=".5"/>'],
            [781.500, 211.500, 28, 19, 0, [['A', 217], ['B', 224.500]], [['R', 221]], '<rect x="-4" y="-4" width="8" height="8" rx="1" fill="#fff" stroke="#555" stroke-width=".8"/><path d="M-1.500 0h3" stroke="#222"/>'],
            [844, 182, 28, 12, 1, [['D', 188.500]], [['R', 188.500]], '<rect x="-4" y="-4" width="8" height="8" fill="#eee" stroke="#333" stroke-width=".6"/><path d="M-2 3v-4l4-2" stroke="#111" stroke-width="1.300" fill="none"/>'],
            [896.500, 183, 28, 19, 0, [['A', 188.500], ['B', 196.500]], [['R', 192]], '<rect x="-4" y="-4" width="8" height="8" fill="#eee" stroke="#444" stroke-width=".7"/><path d="M-1 3L2-3M-3-2l1 3M2 0v3" stroke="#111"/>'],
            [976, 233, 27.500, 27, 1, [['S', 238.500], ['N', 247], ['C', 255]], [['S', 247]], '<path d="M-5 1h4v4h-4zM-2-2h4v4h-4zM1-5h4v4h-4z" fill="#bbb" stroke="#333" stroke-width=".7"/>'],
            [961, 282, 28, 27, 0, [['G', 287.500], ['A', 295.500], ['X', 304]], [['G', 289], ['X', 302]], '<path d="M-4 0q0-2 4-2t4 2-4 1" stroke="#222" fill="none" stroke-width="1.300"/><path d="M0-4v8" stroke="#a22"/>'],
            [763, 286, 28, 18.500, 0, [['G', 295]], [['V', 291], ['C', 299]], '<path d="M-5 3l1-5M-3 3l1-5M-1 3l1-5" stroke="#111" stroke-width="1.600"/><path d="M2-3h2" stroke="#111"/>'],
            [831, 313.500, 27.500, 27, 0, [['S', 319], ['D', 327], ['L', 335]], [['L', 327]], '<path d="M-4 4h6M-3 3l6-6" stroke="#222" stroke-width="1.200"/><circle cx="3" cy="-3" r="1.300"/>'],
            [766, 330.500, 27, 12.500, 1, [['F', 336.500]], [['V', 336.500]], '<path d="M-4 3l3-6v5M1 0h3L1 4h4" stroke="#111" fill="none" stroke-width="1.100"/>'],
            [623, 370, 27.500, 27, 1, [['S', 375], ['N', 383.500], ['C', 392]], [['S', 383.500]], '<path d="M-5 1h4v4h-4zM-2-2h4v4h-4zM1-5h4v4h-4z" fill="#bbb" stroke="#333" stroke-width=".7"/>'],
            [689, 376.500, 26.500, 12.500, 1, [['F', 382.500]], [['V', 382.500]], '<path d="M-4 3l3-6v5M1 0h3L1 4h4" stroke="#111" fill="none" stroke-width="1.100"/>']
        ];
        const port = (x, y) => `<circle cx="${x}" cy="${y}" r="1.300" fill="#fff" stroke="#222" stroke-width=".9"/>`;
        nodes.forEach(([x, y, w, h, dark, ins, outs, icon]) => {
            ins.forEach(p => c += port(x, p[1]));
            outs.forEach(p => c += port(x + w, p[1]));
            c += `<rect x="${x}" y="${y}" width="${w}" height="${h}" rx="1.500" fill="url(#${dark ? 'nodeDark' : 'nodeGrey'})" stroke="#55555c" stroke-width=".9"/>`;
            ins.forEach(p => c += `<text x="${x + 3}" y="${p[1] + 1.500}" font-size="4" fill="#222">${p[0]}</text>`);
            outs.forEach(p => c += `<text x="${x + w - 7}" y="${p[1] + 1.500}" font-size="4" fill="#222">${p[0]}</text>`);
            c += `<g transform="translate(${x + w / 2} ${y + h / 2})">${icon}</g>`;
        });

        // yellow panels
        c += port(753.500, 232.500) + port(774.500, 232.500) + '<rect x="753.500" y="228.500" width="21" height="8.500" rx="1" fill="#fff85a" stroke="#666028"/><text x="761" y="234.500" font-size="4" fill="#554">1</text>';
        c += port(937, 176) + port(975, 176) + '<rect x="937" y="163.500" width="38" height="25" rx="1" fill="#fff85a" stroke="#666028"/><path d="M937.500 164h37v7h-37z" fill="#dbd548"/><path d="M943.500 164v24" stroke="#d9d14a" stroke-width=".6"/><text x="962" y="169" font-size="4" fill="#554">{0}</text><text x="938.500" y="175.500" font-size="4" fill="#554" font-family="Liberation Mono">0 0.136941</text>';
        c += port(841, 273) + port(807, 273) + '<rect x="807" y="265" width="34" height="16.500" rx="1" fill="#fff85a" stroke="#666028"/><path d="M807.500 265.500h33v6h-33z" fill="#dbd548"/><path d="M813.500 265.500v15.500" stroke="#d9d14a" stroke-width=".6"/><text x="828" y="270" font-size="4" fill="#554">{0}</text><text x="808.500" y="277" font-size="4" fill="#554" font-family="Liberation Mono">0 160</text>';
        [[616, 181], [616, 196], [616, 210], [819, 188.500], [600, 371], [600, 382.500], [600, 395.500]].forEach(p => c += port(...p));
        byId('canvas').innerHTML = c;

        // label, left, top, width, label width, value text, percent, text before the knob
        [['X', 34, 49, 70, 9, '10.0', 50, 1], ['Y', 36, 64, 69, 9, '10.0', 50, 1], ['Z', 35, 79, 69, 9, '0.2', 3, 0], ['Grados', 237, 57, 71, 20, '102', 30, 0],
            ['Start', 18, 239, 70, 16, '0', 2, 0], ['Step', 19, 251, 69, 15, '1', 22, 0], ['Count', 19, 264, 69, 18, '14', 68, 1]].forEach(([n, l, t, w, lw, v, pc, before]) => {
            byId('sliders').insertAdjacentHTML('beforeend', `<label class="absolute flex h-[10px] overflow-hidden rounded-[2px] border border-[#55555c] bg-gradient-to-b from-[#f0f0f0] to-[#cacaca] font-['Liberation_Sans',sans-serif] text-[5px] leading-[8px] text-[#222]" style="left:${l}px;top:${t}px;width:${w}px">
                <span class="shrink-0 border-r border-[#55555c] bg-[#9291a1] text-center" style="width:${lw}px">${n}</span>
                <span class="relative min-w-0 flex-1"><span class="absolute inset-x-[4px] top-[4px] border-t border-dotted border-[#bbb]"></span>
                <input type="range" value="${pc}" class="absolute inset-0 h-full w-full appearance-none bg-transparent [&::-webkit-slider-thumb]:size-[5px] [&::-webkit-slider-thumb]:appearance-none [&::-webkit-slider-thumb]:rounded-full [&::-webkit-slider-thumb]:border-2 [&::-webkit-slider-thumb]:border-[#222] [&::-webkit-slider-thumb]:bg-white">
                <span class="absolute top-0" style="${before ? 'right:' + (102 - pc * .9) + '%' : 'left:' + (pc * .9 + 11) + '%'}">${v}</span></span></label>`);
        });
    </script>
</body>
</html>
